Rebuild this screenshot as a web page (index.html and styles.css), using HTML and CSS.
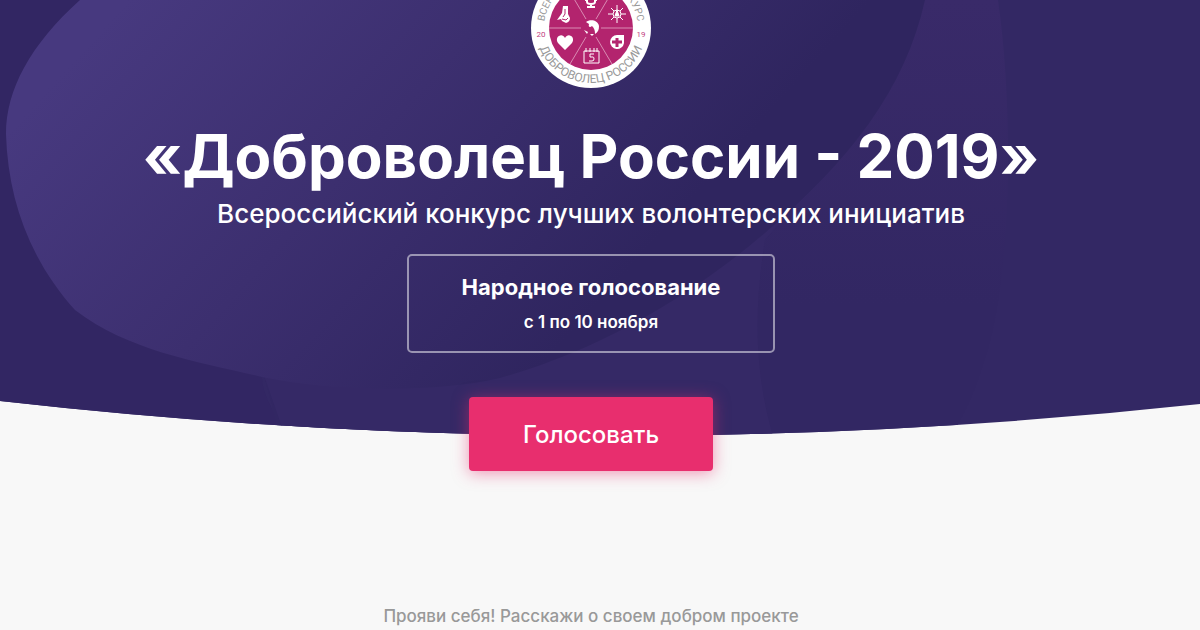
FILE: index.html
```html
<!DOCTYPE html>
<html lang="ru">
<head>
    <meta charset="UTF-8">
    <meta name="viewport" content="width=device-width, initial-scale=1.0">
    <title>Доброволец России - 2019</title>
    <link rel="stylesheet" href="styles.css">
</head>
<body>
    <header class="hero">
        <svg class="hero-bg" viewBox="0 0 1200 436" preserveAspectRatio="none" aria-hidden="true">
            <defs>
                <linearGradient id="blob" gradientUnits="userSpaceOnUse" x1="110" y1="20" x2="520" y2="390">
                    <stop offset="0" stop-color="#47397f"/>
                    <stop offset="0.5" stop-color="#3c2f6f"/>
                    <stop offset="1" stop-color="#2f255f"/>
                </linearGradient>
                <linearGradient id="wave" x1="0" y1="0" x2="0" y2="1">
                    <stop offset="0" stop-color="#392a69"/>
                    <stop offset="0.7" stop-color="#322763"/>
                </linearGradient>
                <clipPath id="curve">
                    <path d="M0 0H1200V404Q600 469 0 401Z"/>
                </clipPath>
            </defs>
            <g clip-path="url(#curve)">
                <rect width="1200" height="436" fill="#332864"/>
                <path d="M0 0V436H290C262 400 262 380 262 377L60 270L80 0Z" fill="#322663"/>
                <path d="M700 0H998C1014 110 1012 280 985 360Q970 410 950 436H280L262 370Z" fill="url(#wave)"/>
                <path d="M262 370L400 380L800 200L765 240C754 310 754 370 773 436H285Z" fill="#352966"/>
                <path d="M80 0C30 45 6 90 6 134C8 200 30 260 75 310C130 352 200 362 262 377C340 393 440 392 500 378C600 350 690 297 765 233C850 160 905 90 925 0Z" fill="url(#blob)"/>
            </g>
        </svg>
        <div class="hero-content">
            <svg class="logo" viewBox="-60 -60 120 120" role="img" aria-label="Всероссийский конкурс Доброволец России">
                <defs>
                    <path id="arc-top" d="M-47 0A47 47 0 0 1 47 0"/>
                    <path id="arc-bottom" d="M-55 0A55 55 0 0 0 55 0"/>
                </defs>
                <circle r="60" fill="#fff"/>
                <circle r="42" fill="#b3246e"/>
                <g stroke="#d98cb3" stroke-width="1">
                    <path d="M-42 0H-10M10 0H42M-21 -36L-5 -9M21 -36L5 -9M-21 36L-5 9M21 36L5 9"/>
                </g>
                <text class="logo-ring logo-ring-top"><textPath href="#arc-top" startOffset="50%">ВСЕРОССИЙСКИЙ КОНКУРС</textPath></text>
                <text class="logo-ring"><textPath href="#arc-bottom" startOffset="50%">ДОБРОВОЛЕЦ РОССИИ</textPath></text>
                <text class="logo-year" x="-50" y="9">20</text>
                <text class="logo-year" x="50" y="9">19</text>
                <!-- bird in the middle -->
                <path d="M-5 -6C-1 -9 7 -8 8 -2C8 2 7 4 4 6C4 2 3 0 1 -2C-1 0 -3 -1 -2 -4Z" fill="#fff"/>
                <path d="M-7 2L-3 4L-4 6ZM-1 6L3 6L1 8Z" fill="#fff"/>
                <!-- cup -->
                <path d="M-4 -32V-26Q-4 -24 0 -24Q4 -24 4 -26V-32M0 -24V-21M-4 -21H4M-4 -28H-6M4 -28H6" fill="none" stroke="#fff" stroke-width="2"/>
                <!-- hand with torch -->
                <path d="M-28 -22H-23V-14L-21 -10Q-21 -6 -25 -5L-29 -7L-30 -9L-34 -8L-29 -15Z" fill="#fff"/>
                <path d="M-26 -19V-14L-28 -11M-29 -9L-25 -8L-23 -10" fill="none" stroke="#b3246e"/>
                <!-- compass star -->
                <g transform="translate(26 -14)" fill="none" stroke="#fff">
                    <circle r="4"/>
                    <path d="M0 -9V-4M0 4V9M-9 0H-4M4 0H9M-6 -6L-3 -3M6 -6L3 -3M-6 6L-3 3M6 6L3 3"/>
                    <path d="M0 -4L2 2H-2Z" fill="#fff"/>
                </g>
                <!-- heart -->
                <path d="M-26 22L-33 15C-37 9 -29 4 -26 10C-23 4 -15 9 -19 15Z" fill="#fff"/>
                <!-- drop with a cross -->
                <path d="M33 7V15A7 7 0 1 1 26 7Z" fill="#fff"/>
                <path d="M26 10V19M21 14H31" stroke="#b3246e" stroke-width="3"/>
                <!-- calendar -->
                <path d="M-7 23H8V35H-7ZM-5 20V24M-1 20V24M3 20V24M6 20V24" fill="none" stroke="#fff"/>
                <path d="M3 26H-1V29H2Q3 29 3 31Q3 33 1 33H-2" fill="none" stroke="#fff"/>
            </svg>
            <h1 class="title">«Доброволец России - 2019»</h1>
            <p class="subtitle">Всероссийский конкурс лучших волонтерских инициатив</p>
            <div class="vote-info">
                <p class="vote-name">Народное голосование</p>
                <p class="vote-dates">с 1 по 10 ноября</p>
            </div>
        </div>
    </header>
    <main class="main">
        <button class="vote-btn" type="button">Голосовать</button>
        <p class="lead">Прояви себя! Расскажи о своем добром проекте</p>
    </main>
</body>
</html>
```
FILE: styles.css
```css
body{
    margin: 0;
    background-color: #f8f8f8;
    color: white;
    font-family: Inter, "Open Sans", sans-serif;
    overflow-x: hidden;
}
p, h1{
    margin: 0;
}
.hero{
    display: grid;
    overflow: hidden;
}
.hero-bg{
    grid-area: 1 / 1;
    width: 100%;
    height: 100%;
}
.hero-content{
    grid-area: 1 / 1;
    z-index: 1;
    display: flex;
    flex-direction: column;
    align-items: center;
    padding: 0 18px 83px 0;
    text-align: center;
}
.logo{
    width: 120px;
    height: 120px;
    margin-top: -32px;
}
.logo-ring{
    fill: #999;
    font-family: Roboto, sans-serif;
    font-size: 12px;
    text-anchor: middle;
}
.logo-ring-top{
    font-size: 10px;
}
.logo-year{
    fill: #c2407f;
    font-family: Roboto, sans-serif;
    font-size: 8px;
    text-anchor: middle;
}
.title{
    margin-top: 32px;
    font-size: 60px;
    font-weight: 700;
    line-height: 72px;
}
.subtitle{
    margin-top: 4px;
    font-size: 26px;
    font-weight: 500;
    line-height: 36px;
}
.vote-info{
    box-sizing: border-box;
    width: 368px;
    max-width: 100%;
    margin-top: 22px;
    padding: 15px 20px;
    border: 2px solid rgba(255, 255, 255, 0.5);
    border-radius: 5px;
}
.vote-name{
    font-size: 22px;
    font-weight: 700;
    line-height: 32px;
}
.vote-dates{
    margin-top: 5px;
    font-size: 17px;
    font-weight: 600;
    line-height: 28px;
}
.main{
    display: flex;
    flex-direction: column;
    align-items: center;
    padding-right: 18px;
    text-align: center;
}
.vote-btn{
    position: relative;
    z-index: 2;
    width: 244px;
    height: 74px;
    margin-top: -39px;
    border: 0;
    border-radius: 4px;
    background-color: #e82e6e;
    box-shadow: 0 2px 16px rgba(232, 46, 110, 0.5);
    color: white;
    font-family: inherit;
    font-size: 24px;
    font-weight: 500;
    cursor: pointer;
}
.lead{
    margin-top: 131px;
    color: #999;
    font-size: 17px;
    font-weight: 500;
    line-height: 28px;
}
```
